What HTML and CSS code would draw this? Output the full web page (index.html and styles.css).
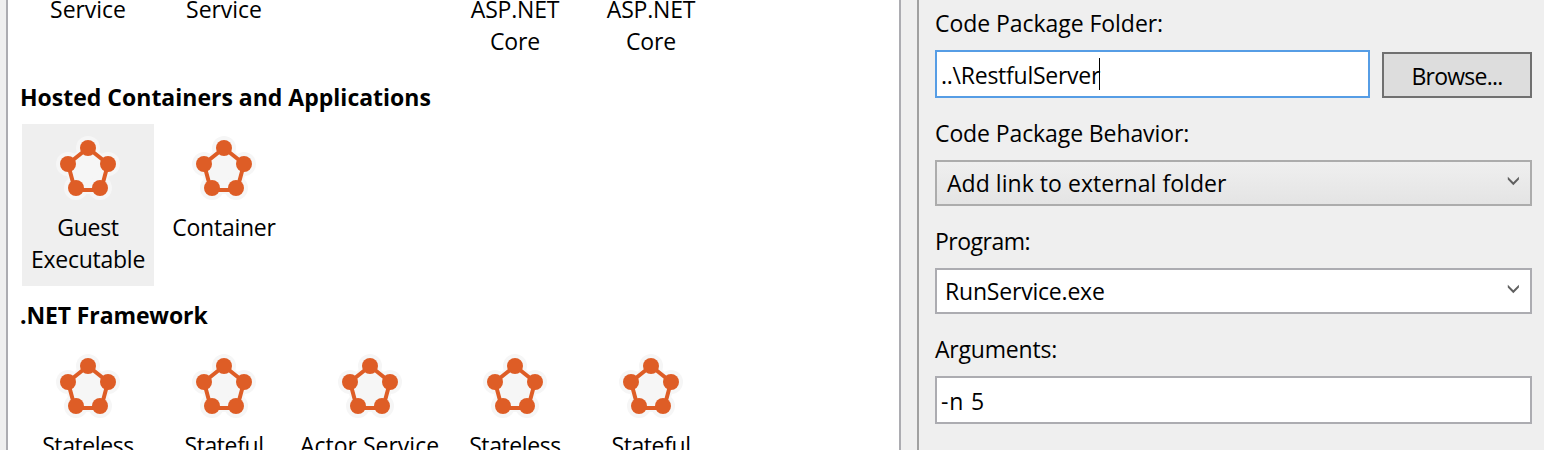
FILE: index.html
```html
<!DOCTYPE html>
<html lang="en">
<head>
<meta charset="utf-8">
<title>New Service Fabric Service</title>
<link rel="stylesheet" href="styles.css">
</head>
<body>
<svg class="defs" width="0" height="0">
  <symbol id="fabric" viewBox="0 0 64 64">
    <g fill="#f6f6f6" stroke="#f6f6f6">
      <path d="M32 12 52 28 45 54H19L12 28Z" stroke-width="8"/>
      <g stroke="none"><circle cx="32" cy="12" r="12"/><circle cx="52" cy="28" r="12"/><circle cx="44" cy="52" r="12"/><circle cx="20" cy="52" r="12"/><circle cx="12" cy="28" r="12"/></g>
    </g>
    <path d="M32 12 52 28 45 54H19L12 28Z" fill="none" stroke="#de5d26" stroke-width="4"/>
    <g fill="#de5d26"><circle cx="32" cy="12" r="8"/><circle cx="52" cy="28" r="8"/><circle cx="44" cy="52" r="8"/><circle cx="20" cy="52" r="8"/><circle cx="12" cy="28" r="8"/></g>
  </symbol>
</svg>
<div class="dialog">
  <main class="templates">
    <div class="row row-core">
      <div class="tile"><span class="label t-service">Service</span></div>
      <div class="tile"><span class="label t-service">Service</span></div>
      <div class="tile wide"></div>
      <div class="tile"><span class="label t-aspnet">ASP.NET<br>Core</span></div>
      <div class="tile"><span class="label t-aspnet">ASP.NET<br>Core</span></div>
    </div>
    <h2 class="heading"><span>Hosted Containers and Applications</span></h2>
    <div class="row row-hosted">
      <div class="tile selected"><svg class="icon"><use href="#fabric"/></svg><span class="label">Guest<br>Executable</span></div>
      <div class="tile"><svg class="icon"><use href="#fabric"/></svg><span class="label">Container</span></div>
    </div>
    <h2 class="heading"><span class="t-net">.NET Framework</span></h2>
    <div class="row">
      <div class="tile"><svg class="icon"><use href="#fabric"/></svg><span class="label t-state">Stateless</span></div>
      <div class="tile"><svg class="icon"><use href="#fabric"/></svg><span class="label t-state">Stateful</span></div>
      <div class="tile wide"><svg class="icon"><use href="#fabric"/></svg><span class="label t-actor">Actor Service</span></div>
      <div class="tile"><svg class="icon"><use href="#fabric"/></svg><span class="label t-state">Stateless</span></div>
      <div class="tile"><svg class="icon"><use href="#fabric"/></svg><span class="label t-state">Stateful</span></div>
    </div>
  </main>
  <aside class="form">
    <div class="caption"><span class="t-folder">Code Package Folder:</span></div>
    <div class="folder">
      <div class="field text focused"><span class="t-path">..\RestfulServer</span><i class="caret"></i></div>
      <div class="browse"><span class="t-browse">Browse...</span></div>
    </div>
    <div class="caption"><span class="t-behavior">Code Package Behavior:</span></div>
    <div class="field select shaded"><span class="t-link">Add link to external folder</span>
      <svg class="chevron" viewBox="0 0 12 10"><path d="M.8.8 6.3 6.2 11.9.8V3.6L6.3 9.2.8 3.6Z" fill="#606060"/></svg></div>
    <div class="caption"><span class="t-program">Program:</span></div>
    <div class="field select"><span class="t-run">RunService.exe</span>
      <svg class="chevron" viewBox="0 0 12 10"><path d="M.8.8 6.3 6.2 11.9.8V3.6L6.3 9.2.8 3.6Z" fill="#606060"/></svg></div>
    <div class="caption"><span class="t-arguments">Arguments:</span></div>
    <div class="field text"><span class="t-args">-n 5</span></div>
  </aside>
</div>
</body>
</html>
```
FILE: styles.css
```css
* { box-sizing: border-box; }
body {
  margin: 0;
  height: 450px;
  overflow: hidden;
  background: #efefef;
  color: #000;
  font: 23px/32px "Open Sans", "Noto Sans", sans-serif;
}
.defs { position: absolute; }
.dialog { display: flex; height: 450px; padding-left: 6px; }
.templates {
  width: 895px;
  height: 450px;
  overflow: hidden;
  padding-left: 14px;
  background: #fff;
  border: solid #acacb1;
  border-width: 0 2px;
}
.row { display: flex; align-items: flex-start; gap: 4px; }
.row-core { height: 67px; }
.row-core .label { margin-top: -7px; }
.row-hosted { height: 162px; }
.tile {
  width: 132px;
  flex: none;
  display: flex;
  flex-direction: column;
  align-items: center;
}
.tile.wide { width: 151px; }
.tile .icon { margin-top: 12px; width: 64px; height: 64px; }
.icon + .label { margin: 11px 0; }
.label { text-align: center; white-space: nowrap; letter-spacing: -0.25px; }
.label.t-service { letter-spacing: -0.05px; }
.label.t-aspnet { letter-spacing: -0.2px; }
.label.t-state { letter-spacing: -0.4px; }
.label.t-actor { letter-spacing: 0; }
.selected { background: #efefef; }
.heading { margin: 0; height: 57px; padding-top: 14px; font-size: 23px; font-weight: 700; line-height: 32px; white-space: nowrap; }
.row-hosted + .heading { height: 56px; padding-top: 13px; }
.heading span { margin-left: -2px; }
.heading .t-net { letter-spacing: -0.12px; }
.form {
  width: 627px;
  margin-left: 16px;
  padding: 0 12px 0 16px;
  border-left: 2px solid #a0a0a0;
}
.caption { height: 62px; padding-top: 19px; white-space: nowrap; }
.caption:first-child { height: 50px; padding-top: 7px; }
.folder { display: flex; gap: 12px; align-items: flex-end; }
.field {
  height: 48px;
  padding-left: 4px;
  display: flex;
  align-items: center;
  background: #fff;
  border: 2px solid #acacb1;
  white-space: nowrap;
}
.field.text { padding-top: 2px; }
.field.focused { width: 435px; border-color: #569de5; }
.select { height: 46px; padding-left: 8px; justify-content: space-between; }
.shaded { padding-left: 10px; background: linear-gradient(#efefef, #e4e4e4); border-color: #acacac; }
.caret { width: 1px; height: 32px; margin: -3px 0 0 -1px; background: #000; }
.chevron { width: 12px; height: 10px; margin: 0 11px 4px 0; }
.browse {
  width: 150px;
  height: 46px;
  display: flex;
  align-items: center;
  justify-content: center;
  padding-top: 1px;
  background: #ddd;
  border: 2px solid #707070;
}
.t-folder { letter-spacing: -0.05px; }
.t-path { letter-spacing: -0.25px; }
.t-browse { letter-spacing: -0.75px; }
.t-behavior { letter-spacing: -0.1px; }
.t-link { letter-spacing: 0.04px; }
.t-program { letter-spacing: -0.5px; }
.t-run { letter-spacing: -0.2px; }
.t-arguments { letter-spacing: -0.2px; }
.t-args { letter-spacing: 0.8px; }
```
